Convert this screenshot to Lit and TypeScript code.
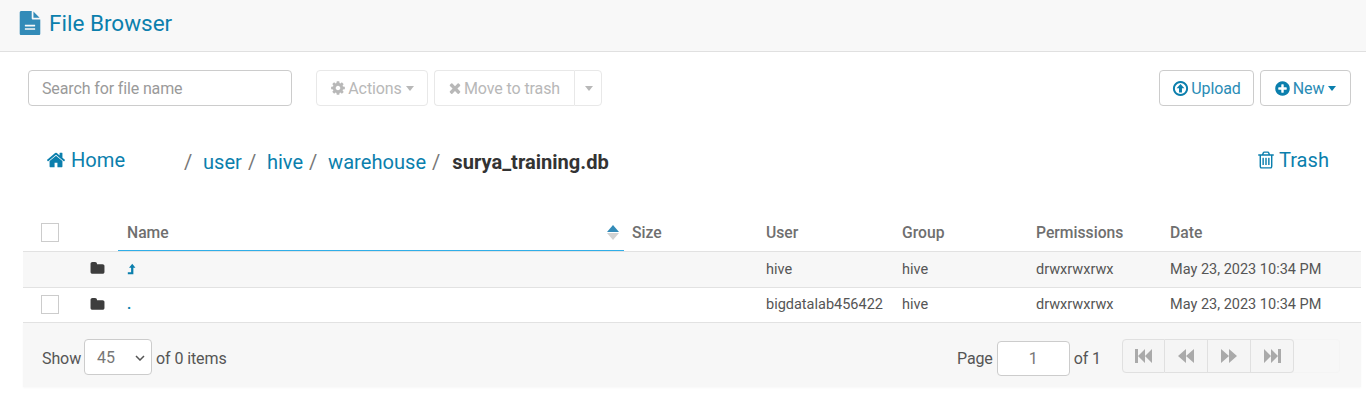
import { LitElement, html, css, svg } from "lit";
import { customElement } from "lit/decorators.js";

const P: Record<string, string> = {
  file: "M1596 476q14 14 28 36h-472v-472q22 14 36 28zm-476 164h544v1056q0 40-28 68t-68 28h-1344q-40 0-68-28t-28-68v-1600q0-40 28-68t68-28h800v544q0 40 28 68t68 28zm160 736v-64q0-14-9-23t-23-9h-704q-14 0-23 9t-9 23v64q0 14 9 23t23 9h704q14 0 23-9t9-23zm0-256v-64q0-14-9-23t-23-9h-704q-14 0-23 9t-9 23v64q0 14 9 23t23 9h704q14 0 23-9t9-23z",
  cog: "M1152 896q0-106-75-181t-181-75-181 75-75 181 75 181 181 75 181-75 75-181zm512-109v222q0 12-8 23t-20 13l-185 28q-19 54-39 91 35 50 107 138 10 12 10 25t-9 23q-27 37-99 108t-94 71q-12 0-26-9l-138-108q-44 23-91 38-16 136-29 186-7 28-36 28h-222q-14 0-24.5-8.5t-11.5-21.5l-28-184q-49-16-90-37l-141 107q-10 9-25 9-14 0-25-11-126-114-165-168-7-10-7-23 0-12 8-23 15-21 51-66.5t54-70.5q-27-50-41-99l-183-27q-13-2-21-12.5t-8-23.5v-222q0-12 8-23t19-13l186-28q14-46 39-92-40-57-107-138-10-12-10-24 0-10 9-23 26-36 98.5-107.5t94.5-71.5q13 0 26 10l138 107q44-23 91-38 16-136 29-186 7-28 36-28h222q14 0 24.5 8.5t11.5 21.5l28 184q49 16 90 37l142-107q9-9 24-9 13 0 25 10 129 119 165 170 7 8 7 22 0 12-8 23-15 21-51 66.5t-54 70.5q26 50 41 98l183 28q13 2 21 12.5t8 23.5z",
  times: "M1490 1322q0 40-28 68l-136 136q-28 28-68 28t-68-28l-294-294-294 294q-28 28-68 28t-68-28l-136-136q-28-28-28-68t28-68l294-294-294-294q-28-28-28-68t28-68l136-136q28-28 68-28t68 28l294 294 294-294q28-28 68-28t68 28l136 136q28 28 28 68t-28 68l-294 294 294 294q28 28 28 68z",
  home: "M1472 992v480q0 26-19 45t-45 19h-384v-384h-256v384h-384q-26 0-45-19t-19-45v-480q0-1 .5-3t.5-3l575-474 575 474q1 2 1 6zm223-69l-62 74q-8 9-21 11h-3q-13 0-21-7l-692-577-692 577q-12 8-24 7-13-2-21-11l-62-74q-8-10-7-23.5t11-21.5l719-599q32-26 76-26t76 26l244 204v-195q0-14 9-23t23-9h192q14 0 23 9t9 23v408l219 182q10 8 11 21.5t-7 23.5z",
  folder: "M1728 608v704q0 92-66 158t-158 66h-1216q-92 0-158-66t-66-158v-960q0-92 66-158t158-66h320q92 0 158 66t66 158v32h672q92 0 158 66t66 158z",
  trash: "M704 736v576q0 14-9 23t-23 9h-64q-14 0-23-9t-9-23v-576q0-14 9-23t23-9h64q14 0 23 9t9 23zm256 0v576q0 14-9 23t-23 9h-64q-14 0-23-9t-9-23v-576q0-14 9-23t23-9h64q14 0 23 9t9 23zm256 0v576q0 14-9 23t-23 9h-64q-14 0-23-9t-9-23v-576q0-14 9-23t23-9h64q14 0 23 9t9 23zm128 724v-948h-896v948q0 22 7 40.5t14.5 27 10.5 8.5h832q3 0 10.5-8.5t14.5-27 7-40.5zm-672-1076h448l-48-117q-7-9-17-11h-317q-10 2-17 11zm928 32v64q0 14-9 23t-23 9h-96v948q0 83-47 143.5t-113 60.5h-832q-66 0-113-58.5t-47-141.5v-952h-96q-14 0-23-9t-9-23v-64q0-14 9-23t23-9h309l70-167q15-37 54-63t79-26h320q40 0 79 26t54 63l70 167h309q14 0 23 9t9 23z",
  plus: "M1344 960v-128q0-26-19-45t-45-19h-256v-256q0-26-19-45t-45-19h-128q-26 0-45 19t-19 45v256h-256q-26 0-45 19t-19 45v128q0 26 19 45t45 19h256v256q0 26 19 45t45 19h128q26 0 45-19t19-45v-256h256q26 0 45-19t19-45zm320-64q0 209-103 385.5t-279.5 279.5-385.5 103-385.5-103-279.5-279.5-103-385.5 103-385.5 279.5-279.5 385.5-103 385.5 103 279.5 279.5 103 385.5z",
  upload: "M896 96a800 800 0 1 0 .01 0zm0 210a590 590 0 1 1-.01 0zM896 420L480 880h260v440h312V880h260z",
  levelup: "M1080 100l480 620h-310v972H420v-300h490V720H600z",
};

const icon = (n: string, size: number) => html`<svg class="ic" width=${size} height=${size} viewBox="0 0 1792 1792" fill="currentColor">${svg`<path d=${P[n]}></path>`}</svg>`;

const nav = (w: number, d: string) => html`<svg class="ic" width=${w} height="14" viewBox="0 0 ${w} 14" fill="currentColor">${svg`<path d=${d}></path>`}</svg>`;

@customElement("app-root")
export class AppRoot extends LitElement {
  static styles = css`
    :host { display: block; font-family: Roboto, "Liberation Sans", sans-serif; color: #444; background: #fff; height: 400px; overflow: hidden; }
    * { box-sizing: border-box; }
    .ic { flex: none; display: block; }
    .top { height: 52px; background: #f8f8f8; border-bottom: 1px solid #e0e0e0; display: flex; align-items: center; gap: 7px; padding: 0 0 6px 18px; color: #0b7fad; font-size: 22.5px; }
    .top .ic { color: #338bb8; }
    .tools { display: flex; align-items: center; padding: 18px 15px 0 28px; height: 54px; }
    .search { width: 264px; height: 36px; border: 1px solid #ccc; border-radius: 4px; padding: 0 13px; font-size: 16px; line-height: 36px; letter-spacing: -0.13px; color: #9a9a9a; }
    .btn { height: 36px; border: 1px solid #e8e8e8; border-radius: 4px; display: flex; align-items: center; justify-content: center; gap: 3px; font-size: 16px; letter-spacing: -0.1px; color: #b8b8b8; background: #fff; }
    .btn span { padding-top: 1px; }
    .caret { width: 0; height: 0; border-left: 4.5px solid transparent; border-right: 4.5px solid transparent; border-top: 5px solid currentColor; margin-left: 2px; }
    .actions { width: 112px; margin-left: 24px; gap: 2px; }
    .move { width: 140px; margin-left: 6px; border-radius: 4px 0 0 4px; border-right: 0; gap: 1px; padding-right: 2px; }
    .split { width: 28px; border-radius: 0 4px 4px 0; }
    .grow { flex: 1; }
    .blue { color: #2a8cb6; border-color: #ccc; }
    .upload { width: 95px; gap: 2px; }
    .new { width: 91px; margin-left: 6px; padding-right: 1px; gap: 2px; }
    .new .ic, .upload .ic { color: #0b7fad; }
    .new .caret { color: #0b7fad; }
    .crumbs { display: flex; align-items: center; height: 108px; padding: 4px 37px 0 46px; font-size: 20.1px; color: #0b7fad; }
    .home { display: flex; align-items: center; gap: 5px; width: 138px; margin-top: -5px; }
    .sep { color: #777; }
    .sp { margin-left: 6px; }
    .lnk { margin-left: 10.7px; }
    .crumbs b { color: #333; font-weight: 700; margin-left: 12px; }
    .trash { display: flex; align-items: center; gap: 3px; margin-top: -5px; }
    .table { margin: 0 5px 0 23px; font-size: 14.5px; color: #555; }
    .row { display: grid; grid-template-columns: 59px 36px 506px 134px 136px 134px 134px 1fr; align-items: center; border-bottom: 1px solid #e2e2e2; }
    .row > div { padding-left: 8px; }
    .head { height: 38px; font-size: 15.7px; font-weight: 500; color: #6f6f6f; padding-bottom: 1px; }
    .head .name { align-self: stretch; padding-left: 9px; display: flex; align-items: center; justify-content: space-between; padding-right: 5px; position: relative; }
    .head .name::after { content: ""; position: absolute; left: 0; right: 0; bottom: -1px; height: 1px; background: #30aee8; }
    .row > .chk { padding-left: 18px; }
    .box { width: 18px; height: 19px; border: 1px solid #ccc; background: #fff; display: block; }
    .r { height: 36px; padding-bottom: 2px; }
    .r1 { background: #f7f7f7; padding-bottom: 1px; }
    .r1 > .fi { margin-top: -1px; }
    .r2 { height: 35px; }
    .r > .fi { padding-left: 8px; color: #3d3d3d; }
    .r .nm { padding-left: 9px; color: #0b7fad; font-weight: 700; }
    .r .nm .ic { margin-left: -2px; margin-top: -1px; }
    .sort { display: flex; flex-direction: column; gap: 1px; margin-top: 1px; }
    .sort i { width: 0; height: 0; border-left: 6px solid transparent; border-right: 6px solid transparent; display: block; }
    .sort .u { border-bottom: 7px solid #338bb8; }
    .sort .d { border-top: 7px solid #d2d2d2; }
    .foot { height: 64px; background: #f7f7f7; display: flex; align-items: center; padding: 4px 21px 0 19px; font-size: 16px; letter-spacing: -0.1px; color: #555; box-shadow: 0 1px 2px rgba(0,0,0,0.03); }
    .foot > span { margin-top: 2px; }
    .sel { width: 68px; height: 36px; margin: 0 4px 0 3px; background: #fff; border: 1px solid #ccc; border-radius: 4px; display: flex; align-items: center; justify-content: space-between; padding: 0 6px 0 12px; color: #777; }
    .chev { display: block; flex: none; color: #555; margin-top: 2px; }
    .pg { width: 73px; height: 35px; margin: 2px 4px 0 4px; background: #fff; border: 1px solid #ccc; border-radius: 4px; display: flex; align-items: center; justify-content: center; color: #777; }
    .nav { display: flex; margin: -2px 0 0 21px; height: 34px; width: 218px; border-radius: 4px; box-shadow: inset 0 0 0 1px #f4f4f4; }
    .nav span { width: 43px; display: flex; align-items: center; justify-content: center; border: 1px solid #e0e0e0; border-left: 0; color: #aaa; background: #f5f5f5; }
    .nav span:first-child { border-left: 1px solid #e0e0e0; border-radius: 4px 0 0 4px; }
    .nav span:last-of-type { border-radius: 0 4px 4px 0; }
  `;

  row(cls: string, check: boolean, name: unknown, user: string) {
    return html`<div class="row r ${cls}">
      <div class="chk">${check ? html`<span class="box"></span>` : ""}</div>
      <div class="fi">${icon("folder", 15)}</div>
      <div class="nm">${name}</div>
      <div></div>
      <div>${user}</div>
      <div>hive</div>
      <div>drwxrwxrwx</div>
      <div>May 23, 2023 10:34 PM</div>
    </div>`;
  }

  render() {
    return html`
      <div class="top">${icon("file", 24)}<span>File Browser</span></div>
      <div class="tools">
        <div class="search">Search for file name</div>
        <div class="btn actions">${icon("cog", 16)}<span>Actions</span><i class="caret"></i></div>
        <div class="btn move">${icon("times", 16)}<span>Move to trash</span></div>
        <div class="btn split"><i class="caret"></i></div>
        <div class="grow"></div>
        <div class="btn blue upload">${icon("upload", 17)}<span>Upload</span></div>
        <div class="btn blue new">${icon("plus", 17)}<span>New</span><i class="caret"></i></div>
      </div>
      <div class="crumbs">
        <div class="home">${icon("home", 20)}<span>Home</span></div>
        <span class="sep">/</span><span class="lnk">user</span>
        <span class="sep sp">/</span><span class="lnk">hive</span>
        <span class="sep sp">/</span><span class="lnk">warehouse</span>
        <span class="sep sp">/</span><b>surya_training.db</b>
        <div class="grow"></div>
        <div class="trash">${icon("trash", 20)}<span>Trash</span></div>
      </div>
      <div class="table">
        <div class="row head">
          <div class="chk"><span class="box"></span></div>
          <div></div>
          <div class="name"><span>Name</span><span class="sort"><i class="u"></i><i class="d"></i></span></div>
          <div>Size</div><div>User</div><div>Group</div><div>Permissions</div><div>Date</div>
        </div>
        ${this.row("r1", false, icon("levelup", 12), "hive")}
        ${this.row("r2", true, ".", "bigdatalab456422")}
        <div class="foot">
          <span>Show</span>
          <div class="sel"><span>45</span><svg class="chev" width="10" height="6" viewBox="0 0 10 6" fill="none" stroke="currentColor" stroke-width="1.5"><path d="M1 1l4 4 4-4"></path></svg></div>
          <span>of 0 items</span>
          <div class="grow"></div>
          <span>Page</span>
          <div class="pg">1</div>
          <span>of 1</span>
          <div class="nav">
            <span>${nav(17, "M0 0h3v14H0zM3 7l7-7v14zM10 7l7-7v14z")}</span>
            <span>${nav(16, "M0 7l8-7v14zM8 7l8-7v14z")}</span>
            <span>${nav(16, "M0 0l8 7-8 7zM8 0l8 7-8 7z")}</span>
            <span>${nav(17, "M0 0l7 7-7 7zM7 0l7 7-7 7zM14 0h3v14h-3z")}</span>
          </div>
        </div>
      </div>
    `;
  }
}
